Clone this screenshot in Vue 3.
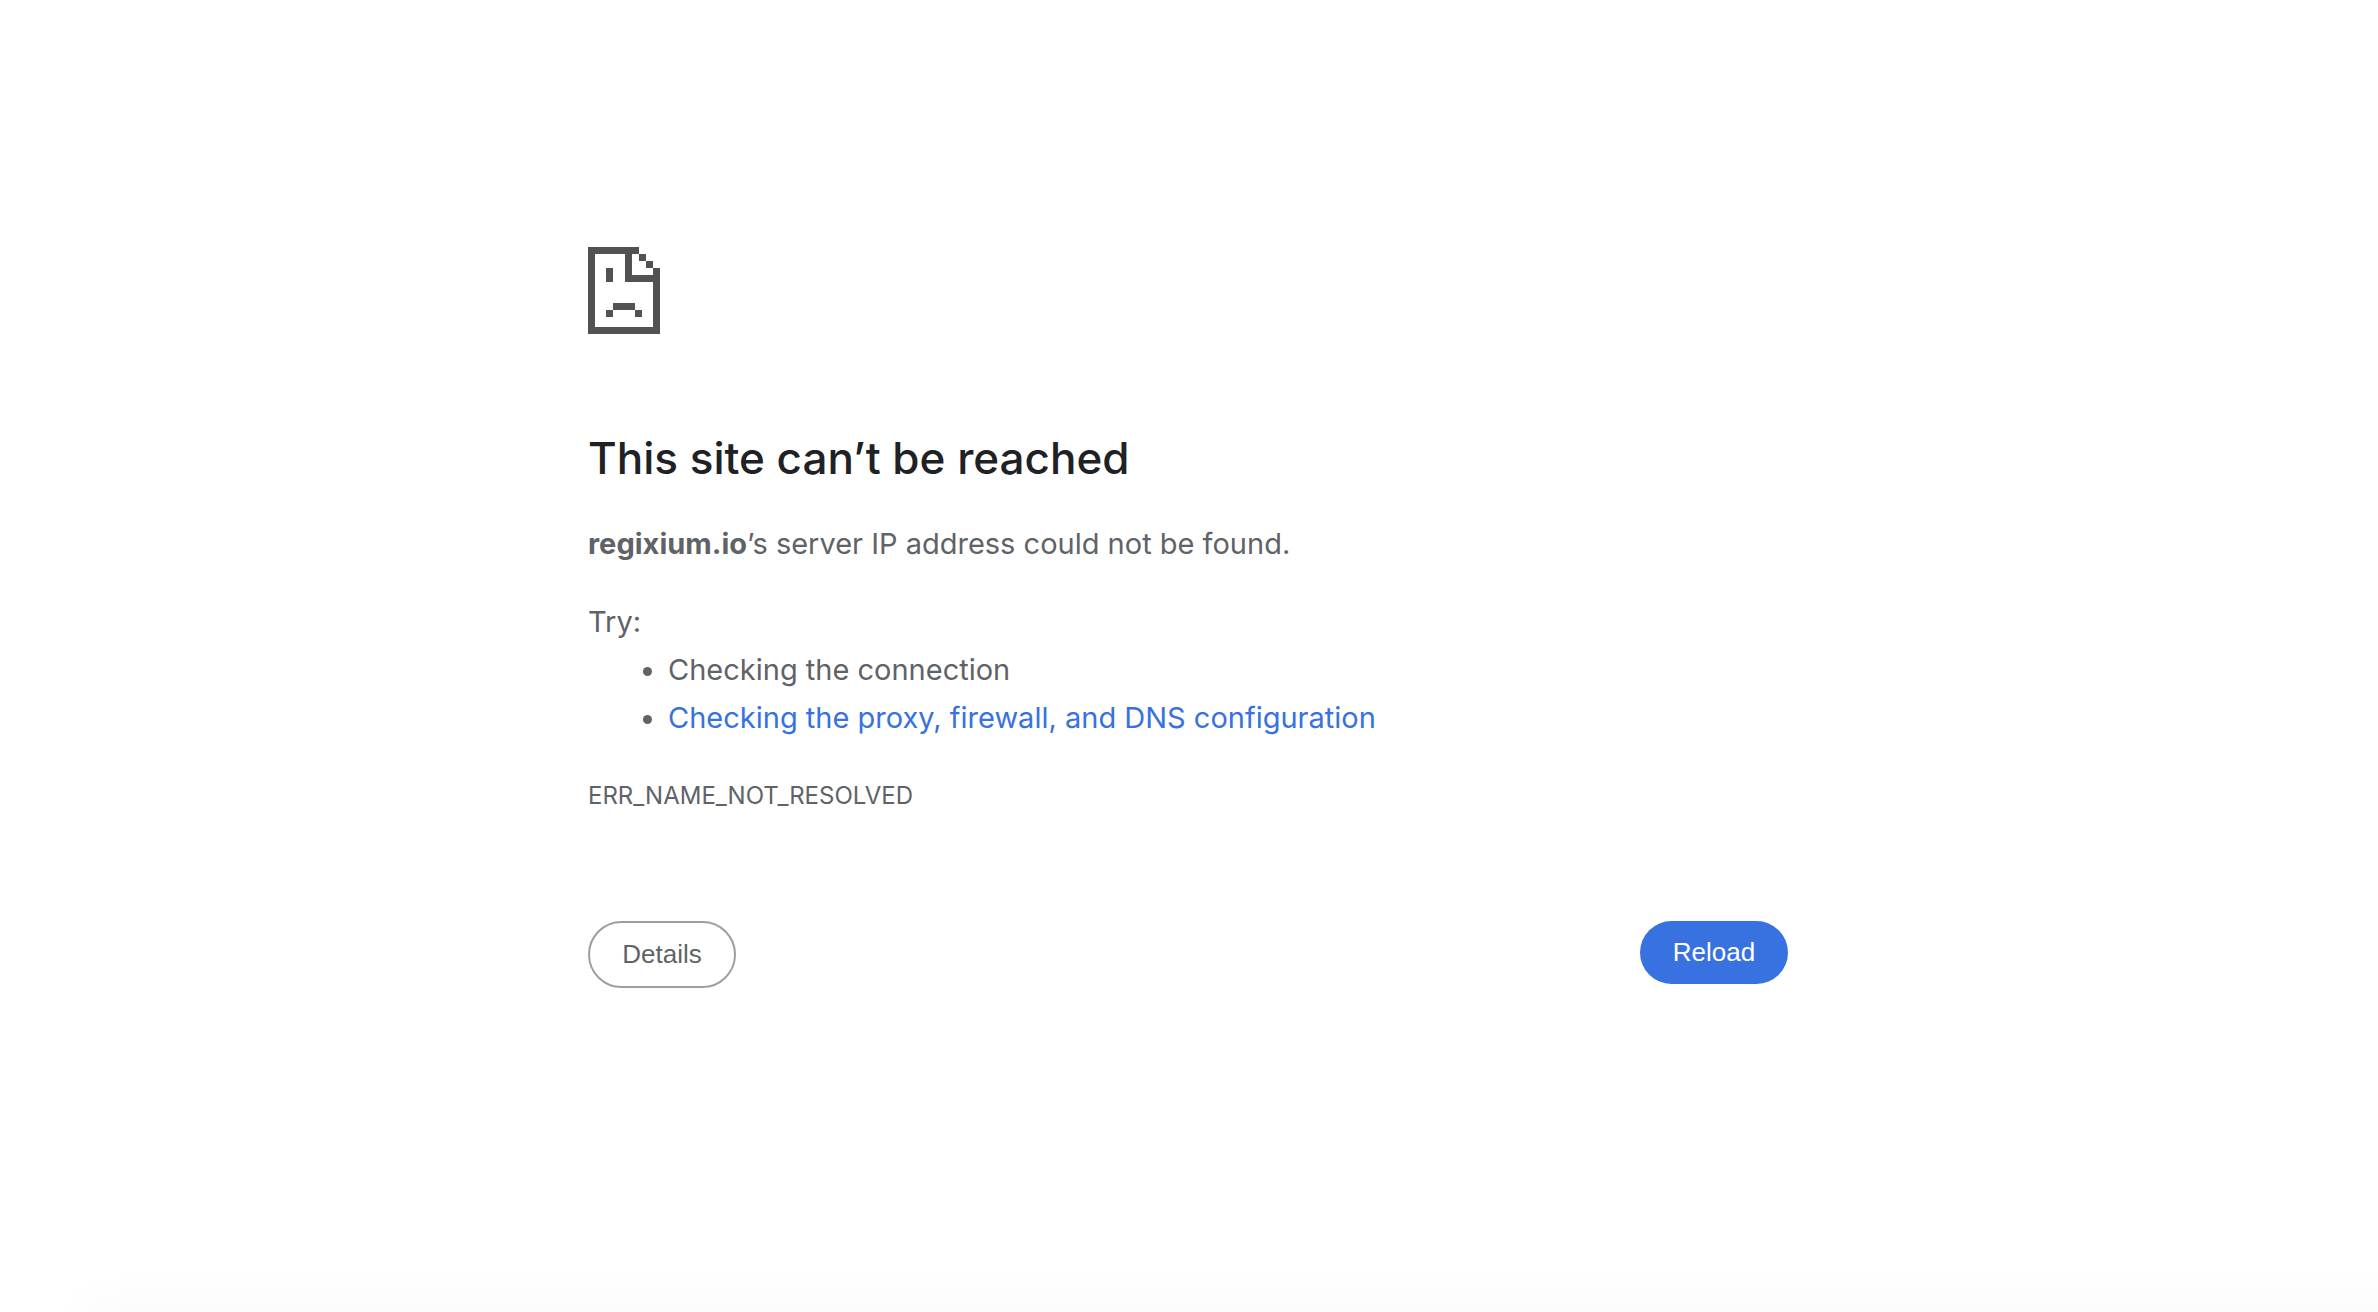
<script setup>
const host = 'regixium.io'
</script>

<template>
  <div class="page">
    <main class="error">
      <svg class="icon" viewBox="0 0 72 87" shape-rendering="crispEdges" aria-hidden="true">
        <path
          fill="#525252"
          fill-rule="evenodd"
          d="M0 0H51V7H58V14H65V21H72V87H0ZM7 7V80H65V35H37V7ZM44 7V28H65V21H58V14H51V7ZM18 21H25V35H18ZM25 56H47V63H54V70H47V63H25V70H18V63H25Z"
        />
      </svg>
      <h1>This site can’t be reached</h1>
      <p class="summary"><strong>{{ host }}</strong>’s server IP address could not be found.</p>
      <div class="suggestions">
        <p>Try:</p>
        <ul>
          <li>Checking the connection</li>
          <li><a href="#buttons">Checking the proxy, firewall, and DNS configuration</a></li>
        </ul>
      </div>
      <p class="code">ERR_NAME_NOT_RESOLVED</p>
      <div id="buttons" class="buttons">
        <button type="button" class="details">Details</button>
        <button type="button" class="reload">Reload</button>
      </div>
    </main>
    <div class="edge-shadow"></div>
  </div>
</template>

<style>
body {
  margin: 0;
  background: #fff;
}
</style>

<style scoped>
.page {
  display: flex;
  flex-direction: column;
  box-sizing: border-box;
  min-height: 100vh;
  padding-right: 2px;
  overflow: hidden;
  color: #5f6368;
  font-family: Inter, sans-serif;
  font-size: 29px;
  line-height: 48px;
}

.error {
  box-sizing: border-box;
  width: 100%;
  max-width: 1200px;
  margin: 0 auto;
  padding-top: 247px;
}

.icon {
  display: block;
  width: 72px;
  height: 87px;
}

h1 {
  margin: 94px 0 32px;
  color: #202124;
  font-size: 44px;
  font-weight: 500;
  line-height: 60px;
}

p {
  margin: 0;
}

strong {
  font-weight: 700;
}

.suggestions {
  margin-top: 30px;
}

ul {
  margin: 0;
  padding-left: 80px;
}

a {
  color: #3871e0;
  text-decoration: none;
}

.code {
  margin-top: 30px;
  font-size: 24px;
}

.buttons {
  display: flex;
  align-items: flex-start;
  justify-content: space-between;
  margin-top: 101px;
}

button {
  box-sizing: border-box;
  width: 148px;
  border-radius: 34px;
  padding: 0 0 2px;
  font-family: "Liberation Sans", Arial, sans-serif;
  font-size: 26px;
  line-height: 30px;
}

.details {
  height: 67px;
  border: 2px solid #9aa0a6;
  background: #fff;
  color: #5f6368;
}

.reload {
  height: 63px;
  border: 0;
  background: #3871e0;
  color: #fff;
}

.edge-shadow {
  height: 12px;
  margin: auto -40px -12px 80px;
  box-shadow: 0 0 50px rgba(0, 0, 0, 0.07);
}
</style>
